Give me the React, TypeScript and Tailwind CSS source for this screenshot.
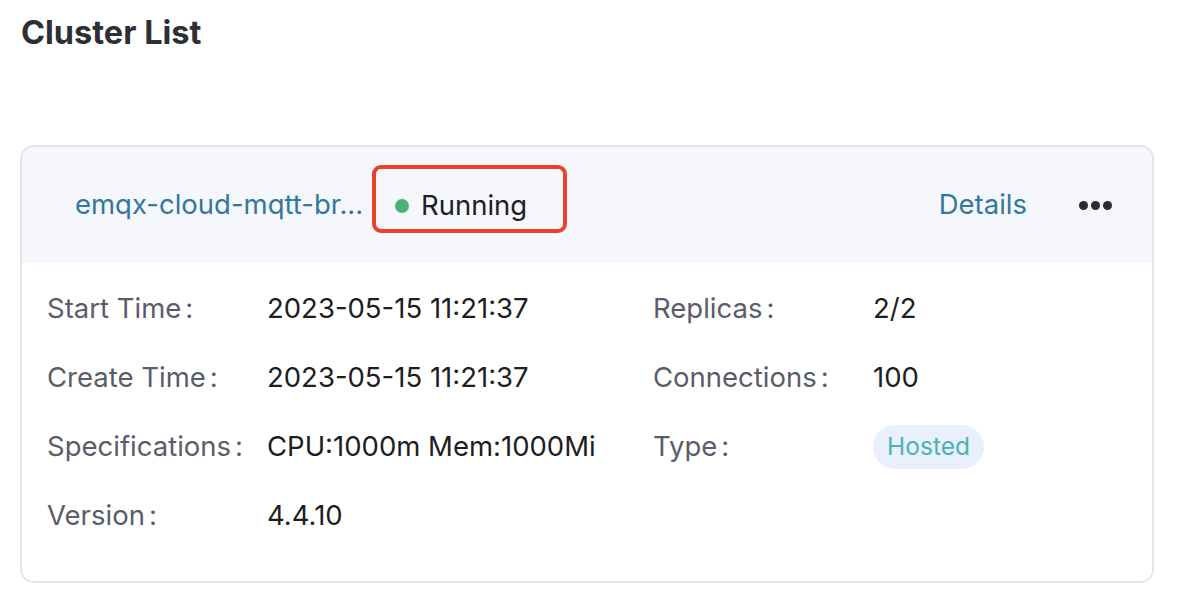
import React from "react";

const rowsLeft: [string, React.ReactNode][] = [
  ["Start Time", "2023-05-15 11:21:37"],
  ["Create Time", "2023-05-15 11:21:37"],
  ["Specifications", "CPU:1000m Mem:1000Mi"],
  ["Version", "4.4.10"],
];

function Label({ text }: { text: string }) {
  return (
    <div className="w-[220px] shrink-0 text-[#5a5d69]">
      {text}
      <span className="ml-[4px]">:</span>
    </div>
  );
}

export default function App() {
  const font = { fontFamily: "Inter, 'Noto Sans', sans-serif" };
  return (
    <div className="w-[1202px] h-[598px] bg-white" style={font}>
      <div className="pl-[21px] pt-[12px] text-[32.5px] font-bold leading-[42px] text-[#2e2f35]">
        Cluster List
      </div>
      <div className="ml-[20px] mt-[91px] w-[1134px] h-[438px] rounded-[14px] border-2 border-[#e3e4ea] overflow-hidden flex flex-col">
        <div className="h-[116px] bg-[#f6f7fc] flex items-center pl-[53px] pr-[40px] text-[27.5px]">
          <div className="text-[#31789b] w-[320px] whitespace-nowrap">emqx-cloud-mqtt-br...</div>
          <div className="relative flex items-center">
            <div className="absolute left-[-23px] top-[-20px] w-[195px] h-[68px] rounded-[9px] border-[4px] border-[#e8412c]" />
            <span className="w-[14px] h-[14px] rounded-full bg-[#4caf73] mt-[2px]" />
            <span className="ml-[12px] text-[#1d1d22] leading-[40px]">Running</span>
          </div>
          <div className="flex-1" />
          <div className="text-[#31789b]">Details</div>
          <div className="ml-[52px] flex gap-[3px] items-center">
            <span className="w-[9px] h-[9px] rounded-full bg-[#2a2b30]" />
            <span className="w-[9px] h-[9px] rounded-full bg-[#2a2b30]" />
            <span className="w-[9px] h-[9px] rounded-full bg-[#2a2b30]" />
          </div>
        </div>
        <div className="flex-1 bg-white pt-[11px] pl-[25px] text-[27.5px] flex">
          <div className="w-[606px] flex flex-col">
            {rowsLeft.map(([l, v]) => (
              <div key={l} className="h-[69px] flex items-center">
                <Label text={l} />
                <div className="text-[#1d1d22] whitespace-nowrap">{v}</div>
              </div>
            ))}
          </div>
          <div className="flex flex-col">
            <div className="h-[69px] flex items-center">
              <Label text="Replicas" />
              <div className="text-[#1d1d22]">2/2</div>
            </div>
            <div className="h-[69px] flex items-center">
              <Label text="Connections" />
              <div className="text-[#1d1d22]">100</div>
            </div>
            <div className="h-[69px] flex items-center">
              <Label text="Type" />
              <div className="h-[44px] w-[111px] justify-center rounded-full bg-[#e9f0fb] text-[#4fb1b6] text-[24.5px] flex items-center">
                Hosted
              </div>
            </div>
          </div>
        </div>
      </div>
    </div>
  );
}
